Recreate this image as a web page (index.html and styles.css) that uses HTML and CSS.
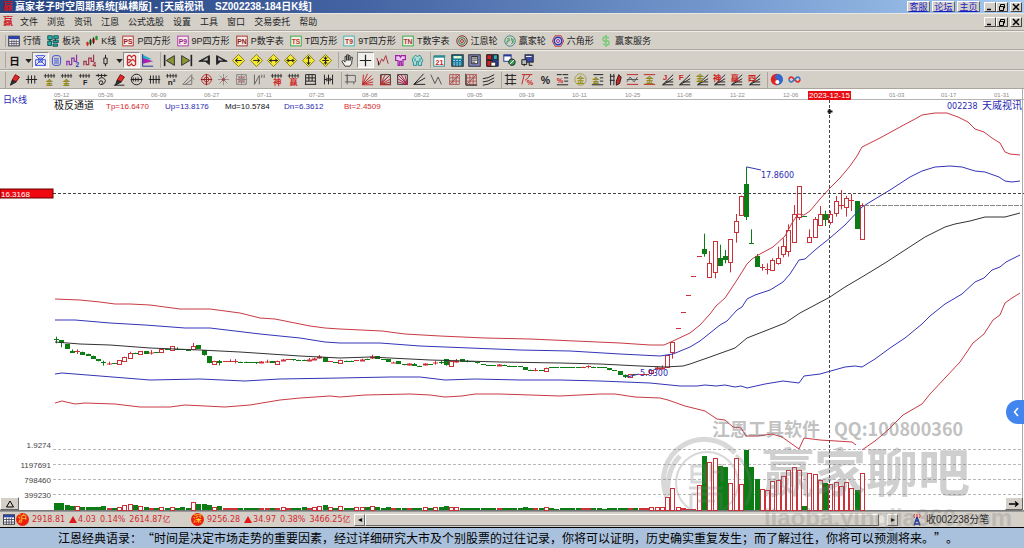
FILE: index.html
```html
<!DOCTYPE html>
<html lang="zh-CN">
<head>
<meta charset="utf-8">
<title>赢家老子时空周期系统[纵横版]</title>
<link rel="stylesheet" href="styles.css">
</head>
<body>
<header class="titlebar">
  <span class="app-logo">赢</span>
  <h1 class="title">赢家老子时空周期系统[纵横版] - [天威视讯&nbsp;&nbsp;&nbsp; SZ002238-184日K线]</h1>
  <nav class="links"><a class="link" href="#service">客服</a><a class="link" href="#forum">论坛</a><a class="link" href="#home">主页</a></nav>
  <div class="window-buttons">
    <button class="win" aria-label="最小化"><svg viewBox="0 0 10 8"><path d="M2 6.5h4" stroke="#000" stroke-width="1.5"/></svg></button>
    <button class="win" aria-label="还原"><svg viewBox="0 0 10 8"><path d="M3.500 3V1.500h4V5H6M2.500 3.500h4v4h-4z" fill="none" stroke="#000"/></svg></button>
    <button class="win close" aria-label="关闭"><svg viewBox="0 0 10 8"><path d="M2 1l6 6M8 1L2 7" stroke="#000" stroke-width="1.5"/></svg></button>
  </div>
</header>
<div class="menubar">
  <span class="app-logo">赢</span>
  <nav class="menu">
    <button>文件</button><button>浏览</button><button>资讯</button><button>江恩</button><button>公式选股</button><button>设置</button><button>工具</button><button>窗口</button><button>交易委托</button><button>帮助</button>
  </nav>
  <div class="window-buttons">
    <button class="win" aria-label="最小化子窗口"><svg viewBox="0 0 10 8"><path d="M2 6.5h4" stroke="#000" stroke-width="1.5"/></svg></button>
    <button class="win" aria-label="还原子窗口"><svg viewBox="0 0 10 8"><path d="M3.500 3V1.500h4V5H6M2.500 3.500h4v4h-4z" fill="none" stroke="#000"/></svg></button>
    <button class="win close" aria-label="关闭子窗口"><svg viewBox="0 0 10 8"><path d="M2 1l6 6M8 1L2 7" stroke="#000" stroke-width="1.5"/></svg></button>
  </div>
</div>
<div class="toolbar"><div class="named" id="named"></div></div>
<div class="toolbar tall" id="view-tools"></div>
<div class="toolbar" id="draw-tools"></div>
<main class="chart">
  <svg class="plot" id="plot" viewBox="0 89 1024 422" role="img" aria-label="天威视讯 日K线"></svg>
  <button class="corner left" aria-label="展开"><svg viewBox="0 0 12 8"><path d="M2.500 7L6 1L9.500 7z" fill="none" stroke="#000"/></svg></button>
  <button class="corner right" aria-label="右移"><svg viewBox="0 0 12 8"><path d="M1 4h9M7 1.500L10 4L7 6.500" fill="none" stroke="#000" stroke-width="1.300"/></svg></button>
  <button class="drawer" aria-label="侧栏"><svg viewBox="0 0 8 10"><path d="M6 1L2.500 5L6 9" fill="none" stroke="#fff" stroke-width="1.500"/></svg></button>
</main>
<div class="status">
  <svg class="status-icon" viewBox="0 0 14 12"><rect x=".5" y=".5" width="13" height="11" fill="#fff" stroke="#223"/><path d="M1 2h12" stroke="#2a46a8" stroke-width="3"/><path d="M1 6h12M1 9h12M4 4v8M7 4v8M10 4v8" stroke="#445"/></svg>
  <span class="badge">沪</span>
  <p class="quote sh"><span>2918.81</span> <i class="up"></i><span>4.03</span> <span>0.14%</span> <span>2614.87亿</span></p>
  <span class="badge">深</span>
  <p class="quote sz"><span>9256.28</span> <i class="up"></i><span>34.97</span> <span>0.38%</span> <span>3466.25亿</span></p>
  <div class="scroll">
    <button class="arrow" aria-label="向左">◂</button><span class="thumb"></span><button class="arrow" aria-label="向右">▸</button>
  </div>
  <div class="feed">
    <svg class="antenna" viewBox="0 0 10 13"><path d="M5 4L2 12.500M5 4L8 12.500M3.500 8h3M2.500 11h5" stroke="#22329c" fill="none" stroke-width="1.300"/><path d="M2.500 1q-1.500 2 0 4M7.500 1q1.500 2 0 4M5 1v3" stroke="#e03030" fill="none"/></svg>
    <span>收002238分笔</span>
  </div>
  <span class="site-mark">liaoba.yingjia360.com</span>
</div>
<footer class="motto">江恩经典语录：“时间是决定市场走势的重要因素，经过详细研究大市及个别股票的过往记录，你将可以证明，历史确实重复发生；而了解过往，你将可以预测将来。”。</footer>
<script src="app.js"></script>
</body>
</html>
```
FILE: styles.css
```css
* { box-sizing: border-box; }
body {
  margin: 0;
  background: #d4d0c8;
  color: #222;
  font: 9px/12px "Liberation Sans", "Noto Sans CJK SC", sans-serif;
}
button {
  font: inherit;
  color: inherit;
  background: none;
  border: 0;
  padding: 0;
}
svg { display: block; }

.titlebar {
  display: flex;
  align-items: center;
  height: 14px;
  padding: 0 2px 0 3px;
  background: linear-gradient(90deg, #25437f, #4463a2 35%, #7195cb 68%, #a6caf0);
  border-bottom: 1px solid #e9e7e2;
}
.app-logo { width: 12px; color: #d01822; font-size: 10px; font-weight: 700; }
.title {
  flex: 1;
  margin: 0;
  color: #fff;
  font-size: 10px;
  line-height: 13px;
  font-weight: 700;
  white-space: nowrap;
}
.links { display: flex; gap: 2px; margin-right: 4px; }
.link {
  width: 23px;
  height: 11px;
  line-height: 10px;
  text-align: center;
  color: #1a1ac0;
  background: #d4d0c8;
  border: 1px solid;
  border-color: #fff #666 #666 #fff;
}
.window-buttons { display: flex; margin-left: auto; }
.win {
  width: 12px;
  height: 10px;
  background: #d4d0c8;
  border: 1px solid;
  border-color: #fff #444 #444 #fff;
}
.win svg { width: 10px; height: 8px; }
.close { margin-left: 2px; }

.menubar {
  display: flex;
  align-items: center;
  height: 17px;
  padding: 0 2px 0 3px;
  border-bottom: 1px solid #aaa69e;
}
.menu { display: flex; gap: 9px; margin-left: 5px; }

.toolbar {
  display: flex;
  align-items: center;
  height: 19px;
  padding-left: 5px;
  border-top: 1px solid #efede8;
  border-bottom: 1px solid #aaa69e;
}
.tall { height: 20px; }
.named {
  display: flex;
  justify-content: space-between;
  width: 646px;
  padding-left: 2px;
  border-left: 1px solid #aaa69e;
}
.named button { display: flex; align-items: center; gap: 3px; white-space: nowrap; }
.named svg { width: 12px; height: 12px; }
.group {
  display: flex;
  justify-content: space-between;
  border-left: 1px solid #aaa69e;
}
.group + .group { margin-left: 4px; }
.group button {
  display: grid;
  place-items: center;
  width: 17px;
  height: 16px;
}
.group svg { width: 13px; height: 13px; overflow: visible; }
.group .narrow { width: 10px; }
.group .pressed {
  background: #f1efeb;
  border: 1px solid;
  border-color: #888 #fff #fff #888;
}

.chart { position: relative; background: #fff; border-bottom: 1px solid #777; }
.plot { width: 100%; height: auto; margin-bottom: -1px; }
.corner {
  position: absolute;
  bottom: 0;
  display: grid;
  place-items: center;
  height: 13px;
  background: #d4d0c8;
  border: 1px solid;
  border-color: #fff #666 #666 #fff;
}
.corner svg { width: 12px; height: 8px; }
.left { left: 0; width: 19px; }
.right { right: 1px; width: 18px; }
.drawer {
  position: absolute;
  right: 0;
  top: 311px;
  width: 18px;
  height: 24px;
  padding-left: 6px;
  background: #4285ee;
  border-radius: 12px 0 0 12px;
}
.drawer svg { width: 8px; height: 10px; }

.status {
  position: relative;
  display: flex;
  align-items: center;
  height: 16px;
  padding-left: 3px;
  border-top: 1px solid #999;
}
.status-icon { width: 12px; height: 11px; margin-right: 1px; }
.badge {
  width: 13px;
  height: 13px;
  border-radius: 50%;
  background: #e8200c;
  color: #ffe23c;
  line-height: 13px;
  text-align: center;
}
.quote {
  display: flex;
  align-items: center;
  gap: 4px;
  margin: 0 0 0 3px;
  color: #d6282c;
  font-family: "DejaVu Sans", "Noto Sans CJK SC", sans-serif;
  font-size: 8px;
  white-space: nowrap;
}
.sh { width: 159px; }
.sz { width: 147px; }
.up {
  border: 4px solid transparent;
  border-top: 0;
  border-bottom: 7px solid #e01818;
  margin-right: -3px;
}
.scroll {
  display: flex;
  flex: 1;
  height: 12px;
  margin-right: 14px;
  background: #e8e5df;
}
.arrow, .thumb {
  background: #d4d0c8;
  border: 1px solid;
  border-color: #fff #666 #666 #fff;
}
.arrow { width: 11px; line-height: 9px; font-size: 8px; color: #000; }
.thumb { flex: 1; margin-right: 8px; }
.feed {
  display: flex;
  align-items: center;
  gap: 4px;
  width: 112px;
  font-size: 10px;
}
.antenna { width: 10px; height: 13px; }
.site-mark {
  position: absolute;
  right: 12px;
  bottom: -6px;
  color: #777;
  opacity: .25;
  font: 700 24px/30px "Liberation Sans", sans-serif;
  pointer-events: none;
}
.motto {
  min-height: 21px;
  padding-left: 58px;
  background: #a9c1dc;
  border-top: 1px solid #000;
  color: #000;
  font: 12px/20px "Noto Sans CJK SC", sans-serif;
  text-spacing-trim: space-all;
}

.axis { font-size: 6px; fill: #8c8c8c; }
.small { font-size: 8px; }
.price { font: 8px "DejaVu Sans", sans-serif; fill: #2a2ab4; }
.indicator { font-size: 10px; fill: #111; }
.blue { fill: #2a2ab4; }
.red { fill: #d6282c; }
.code { font: 10px "Liberation Sans", "Noto Sans CJK SC", sans-serif; fill: #2a2ab4; }
.mark { font-family: "Noto Sans CJK SC", sans-serif; font-weight: 700; fill: #777; }
```
FILE: app.js
```js
const svg = (body) =>
  `<svg viewBox="0 0 16 16" fill="none" stroke="#222" stroke-width="1.2">${body}</svg>`;
const glyph = (t, color, x = 8, y = 13, size = 10) =>
  `<text x="${x}" y="${y}" font-size="${size}" font-weight="700" text-anchor="middle" fill="${color}" stroke="none">${t}</text>`;
const boxed = (t, frame, ink) =>
  svg(`<rect x="1" y="1.500" width="14" height="13" fill="#f4ece6" stroke="${frame}"/>` + glyph(t, ink, 8, 12, 9));

const table = svg('<rect x="1" y="1.500" width="14" height="13" fill="#fff" stroke="#223"/><path d="M1 3.500h14" stroke="#2a3fa8" stroke-width="4"/><path d="M1 8.500h14M1 11.500h14M5 6v8M8 6v8M11 6v8" stroke="#445" stroke-width="1"/>');

const named = [
  ['行情', table],
  ['板块', svg('<path d="M1 1h6v5H1zM9 1h6v4H9zM1 8h5v6H1zM8 7h7v3H8zM8 12h6v3H8z" fill="#24b3ae" stroke="#12504e"/><path d="M4 6v3M11 5v3" />')],
  ['K线', svg('<path d="M2 15V9M14 7V1" stroke="#d22"/><path d="M1 10h2v3H1zM9 5h2v5H9z" fill="#d22" stroke="#d22"/><path d="M5 7h2v5H5zM13 2h2v4h-2z" fill="#1a9a3a" stroke="#1a9a3a"/><path d="M6 5v9M10 3v9"/>')],
  ['P四方形', boxed('PS', '#b03030', '#a01818')],
  ['9P四方形', boxed('P9', '#b030b0', '#a01890')],
  ['P数字表', boxed('PN', '#a02828', '#8a1818')],
  ['T四方形', boxed('TS', '#28a83c', '#c03a20')],
  ['9T四方形', boxed('T9', '#30b4b0', '#a83030')],
  ['T数字表', boxed('TN', '#28a83c', '#a83030')],
  ['江恩轮', svg('<circle cx="8" cy="8" r="7" stroke="#7a1c1c"/><circle cx="8" cy="8" r="4.500" stroke="#286e38"/><circle cx="8" cy="8" r="2" stroke="#a02020"/>')],
  ['赢家轮', svg('<circle cx="8" cy="8" r="7" stroke="#3c8888"/><path d="M4 5h3v3H4v4M9 4q3 1 1 3q3 1 0 5M12 5v6" stroke="#2d9a54"/>')],
  ['六角形', svg('<path d="M4 1h8l3.500 7L12 15H4L.5 8z" stroke="#c23030"/><circle cx="8" cy="8" r="5" stroke="#2a3cc4" stroke-width="2"/><circle cx="8" cy="8" r="2" stroke="#8a2ab0"/>')],
  ['赢家服务', svg('<path d="M12 4Q4 1 4 5t4 3t4 3t-8 1M8 0v16" stroke="#7acb7a" stroke-width="2.200"/>')]
];
document.getElementById('named').innerHTML =
  named.map(([label, icon]) => `<button>${icon}<span>${label}</span></button>`).join('');

const caret = '<path d="M4 6h8l-4 5z" fill="#222" stroke="none"/>';
const diamond = (mark) =>
  `<path d="M8 .5L15.500 8L8 15.500L.5 8z" fill="#f4e832" stroke="#8c8210"/><path d="${mark}"/>`;
const comb = '<path d="M1 3.500h14M3 1v5M6.500 1v5M10 1v5M13.500 1v5" stroke-width="1"/>';
const fan = '<path d="M2 14.500L15 2M2 14.500L15 7M2 14.500h13M6 11h9"/>';
const burst = (c) => `<path d="M2 14L3 2M2 14L8 1M2 14L13 3M2 14L15 7M2 14L15 11M1 14.500h14" stroke="${c}"/>`;
const star = '<path d="M8 1v14M1 8h14M3 3l10 10M13 3L3 13" stroke="#888" stroke-width="1"/>';
const grid = (c) => `<path d="M2 2h12v12H2zM2 6h12M2 10h12M6 2v12M10 2v12M2 14L14 2" stroke="${c}" stroke-width="1"/>`;
const pencil = '<path d="M5 9L9 2l5 3l-4 6z" fill="#e02828" stroke="#801010"/><path d="M5 9l5 2l-7 4z" fill="#333"/>';
const rules = (c) => `<path d="M1 2h14M1 14h14" stroke="${c}"/>`;

const viewGroups = [
  [151, [
    ['日', glyph('日', '#111', 8, 13, 13)], ['周期', caret, 'narrow'],
    ['叠加', '<path d="M2 2l12 12M14 2L2 14M3 2h10M2 7h12v7H2zM6 5h4v5H6z" stroke="#3a4fe0"/>', 'pressed'],
    ['信息', '<rect x="3" y="2" width="10" height="12" rx="3" stroke="#3a4fe0"/><path d="M5 6h6M5 8.500h6M5 11h6" stroke="#3a4fe0"/>'],
    ['走势2', '<path d="M1 14V9h3v4h3V5h3v4h3V1" stroke="#8a34a8" stroke-width="1.500"/>' + glyph('2', '#3038c0', 14, 16, 8)],
    ['走势4', '<path d="M1 14V9h3v4h3V5h3v4h3V1" stroke="#a03450" stroke-width="1.500"/>' + glyph('4', '#a02030', 14, 16, 8)],
    ['K线样式', '<path d="M6 5h4v7H6zM8 1v4M8 12v3"/>'], ['样式选择', caret, 'narrow'],
    ['通道', '<path d="M3 3q3-3 5 1q3-4 5-1v10q-3 3-5-1q-3 4-5 1zM3 7h4M9 6l4 4M4 11l5-4" stroke="#c82828" stroke-width="1.500"/>', 'pressed'],
    ['旗', '<path d="M2 1l11 5L2 9z" fill="#22b0c8" stroke="none"/><path d="M2 5l13 4L2 12z" fill="#b020b0" stroke="none"/><path d="M2 0v15h13" stroke="#2038a0"/>']
  ]],
  [174, [
    ['最前', '<path d="M2 1v14" stroke-width="2"/><path d="M14 2v12L4 8z" fill="#8a9630" stroke="#333"/>'],
    ['最后', '<path d="M14 1v14" stroke-width="2"/><path d="M2 2v12l10-6z" fill="#8a9630" stroke="#333"/>'],
    ['左', '<path d="M14 2v11L9 9H1z" fill="#222"/><path d="M12 4v4H6z" fill="#bbb" stroke="none"/>'],
    ['右', '<path d="M2 2v11l5-4h8z" fill="#222"/><path d="M4 4v4h6z" fill="#bbb" stroke="none"/>'],
    ['左移', diamond('M4 8h8M7 5.500L4 8l3 2.500')], ['右移', diamond('M4 8h8M9 5.500L12 8l-3 2.500')],
    ['拉宽', diamond('M3 8h10M6 6L3 8l3 2M10 6l3 2l-3 2')], ['缩窄', diamond('M3 8h10M4 6l3 2l-3 2M12 6L9 8l3 2')],
    ['拉高', diamond('M8 3v10M6 6l2-3l2 3M6 10l2 3l2-3')], ['压低', diamond('M8 3v10M4 8h8M6 4l2 3l2-3M6 12l2-3l2 3')]
  ]],
  [88, [
    ['手形', '<path d="M5 15L1 9l2-1l2 2V3h2v5V1h2v7V2h2v6l1-4h2l-1 8l-2 3z" fill="#f5f2ec" stroke="#333"/>'],
    ['十字', '<path d="M8 1v14M1 8h14" stroke-width="1.500"/>', 'pressed'],
    ['波浪', '<path d="M1 5l3 8l3-7l2 3l3-7l3 10" stroke="#b03040"/><path d="M3 9v5"/>'],
    ['工具一', '<path d="M2 2h5l1 2l1-2h5v5h-3v7H9V9H7v5H5V8H2z" fill="#eac6f0" stroke="#a020a8" stroke-width="1.500"/>'],
    ['工具二', '<path d="M3 4q2-4 5-1q4-3 5 2q3 3 0 6v3H9V9H7v5H3v-3Q0 7 3 4zM5 5v4M11 5v5" fill="#b2ded8" stroke="#208c90"/>']
  ]],
  [106, [
    ['日历', '<rect x="1" y="3" width="13" height="12" fill="#fff" stroke="#308a90"/><path d="M1 3h14" stroke="#308a90" stroke-width="3"/>' + glyph('21', '#d02020', 8, 13, 9)],
    ['计算器', '<rect x="1" y="1" width="14" height="14" fill="#127ea0"/><path d="M3 4h10" stroke="#e2f4d0" stroke-width="3"/><path d="M3 8h10M3 11h10M3 13.500h10" stroke="#d2e0e8" stroke-dasharray="2 1.500"/>'],
    ['记录', '<rect x="1" y="1" width="14" height="14" fill="#8a92cc" stroke="#223"/><path d="M4 3h8v9H4z" fill="#fff"/><path d="M5 5h6M5 7.500h6M5 10h4"/>'],
    ['保存', '<path d="M1 1h14v14H1z" fill="#2440b0"/><path d="M1 8h7v7H1z" fill="#d02020"/><path d="M1 1h6v6H1z" fill="#d02020"/><path d="M9 1h5v6H9z" fill="#30b0a8"/><path d="M6 10h6v5H6z" fill="#fff"/>'],
    ['联网', '<rect x="1" y="1" width="9" height="8" fill="#fff" stroke="#2a3a90"/><path d="M1 2h9" stroke="#2a3a90" stroke-width="2"/><circle cx="11" cy="10" r="4" fill="#3aa058"/><path d="M8 13l6-6" stroke="#fff"/>'],
    ['屏幕', '<rect x="5" y="1" width="10" height="9" fill="#3a4aa8"/><path d="M6 3h7" stroke="#fff"/><path d="M1 7h6v6H1zM4 13v2M10 10v4h4" fill="#b8b8b8"/>']
  ]]
];

const drawGroups = [
  [332, [
    ['画笔', pencil], ['平行', '<path d="M1 8h14M4 3v10M8 3v10M12 3v10"/>'],
    ['黄金1', comb + glyph('金', '#8e8414', 8, 15, 9)], ['黄金2', comb + glyph('金', '#8e8414', 8, 15, 9)],
    ['斐波那契', comb + glyph('F', '#222', 9, 15, 9)],
    ['螺旋', '<path d="M1 3h14M4 1v4M8 1v4M12 1v4M4 9q1-4 6-3q5 3 1 7q-5 3-6-1q1-4 4-2q2 2-1 3"/>'],
    ['红笔', pencil + '<path d="M1 15h13"/>'],
    ['周期圆', '<circle cx="8" cy="8" r="6.500"/><path d="M1 8h14M4 5.500v5M7 5.500v5M10 5.500v5"/>'],
    ['等分', '<path d="M1 8h14M3 3v10M6.500 3v10M10 3v10M13.500 3v10"/>'],
    ['平方', comb + glyph('n²', '#222', 8, 15, 10)],
    ['三角', '<path d="M1 14L12 2v12zM4 14l8-6M12 5l3 3" stroke="#777"/>'],
    ['圆心', '<circle cx="8" cy="8" r="6" stroke="#b83030"/><circle cx="8" cy="8" r="3" stroke="#b83030"/><path d="M8 1v14M1 8h14" stroke="#902020"/>'],
    ['星', star + '<circle cx="8" cy="8" r="2" fill="#a84848" stroke="none"/>'],
    ['网星', star + '<path d="M2 2h12v12H2z" stroke="#888"/><path d="M5 5h6v6H5z" stroke="#b06060"/>'],
    ['折线', '<path d="M3 2v12L9 3v11M12 2v4M15 2v4" stroke="#666"/>'],
    ['神', comb + glyph('神', '#d02424', 9, 15, 10)], ['赢', comb + glyph('赢', '#d02424', 8, 15, 10)],
    ['网格', '<path d="M2 2h12v12M2 2v12M2 6h12M2 10h12M6 2v8M10 2v8M1 14h14" />'],
    ['间隔', '<path d="M3 2v12M8 2v12M13 2v12M3 8h3M13 8h-3M5 6l3 2l-3 2M11 6L8 8l3 2"/>']
  ]],
  [156, [
    ['方框', '<path d="M4 3h10v8H4zM1 3h3M4 1v13M1 11h4M12 11v3" stroke="#666"/>'], ['扇形', burst('#c02828')],
    ['扇形框', '<path d="M2 2h12v12H2z" stroke="#333"/><path d="M2 13L13 3" stroke="#5a38b0"/>' + burst('#b83030')],
    ['反扇框', '<path d="M2 2h12v12H2z" stroke="#333"/><path d="M14 14L2 2M14 14L6 2M14 14L2 7M14 14L11 3M14 14L2 11" stroke="#b02050"/>'],
    ['角度', '<path d="M1 14h14M1 14L13 1M1 14L15 6"/>'], ['波段', '<path d="M1 2l5 11l4-8l4 9" stroke="#555"/>'],
    ['红网', grid('#a84444')], ['红网角', grid('#a84444') + '<path d="M1 1v14h14"/>'],
    ['平行线', '<path d="M1 7q6 0 14-5M1 11q6 0 14-5M1 15q6 0 14-5"/>']
  ]],
  [262, [
    ['阶梯', '<path d="M4 1v14M10 1v14M1 3h14M4 8h11M1 13h14"/>'],
    ['反百分比', '<path d="M1 2h13M4 2L1 14M11 2Q10 6 5 9" stroke="#c02828"/>' + glyph('%', '#d02020', 11, 15, 9)],
    ['百分比', glyph('%', '#222', 8, 13, 13)],
    ['百分线', '<path d="M8 2h7M10 6h5M10 10h5M1 14.500h14M1 2h6"/>' + glyph('%', '#d02020', 5, 12, 9)],
    ['金圆', '<circle cx="8" cy="8" r="7" stroke="#a09a50"/>' + glyph('金', '#9a9018', 8, 12, 10)],
    ['金线', '<path d="M3 2h12M11 6h4M11 10h4M1 14.500h14"/>' + glyph('金', '#8e8414', 6, 12, 9)],
    ['标笔', '<path d="M2 1v14M6 1v14M1 4h6M1 9h6"/><path d="M9 10l3-8l3 3l-2 8l-4 2z" fill="#c82828" stroke="#401010"/>'],
    ['红波', rules('#c02828') + '<path d="M1 11l4-6l5 6l4-6M1 8h14" stroke="#555"/>'],
    ['金红线', rules('#c02828') + glyph('金', '#8e8414', 8, 12, 10)],
    ['J扇', fan + glyph('J', '#d02020', 5, 9)], ['F扇', fan + glyph('F', '#d02020', 4, 9)],
    ['金扇', fan + glyph('金', '#8e8414', 5, 10)], ['神扇', fan + glyph('神', '#d02020', 5, 10)],
    ['赢扇', fan + glyph('赢', '#d02020', 6, 10)], ['四扇', fan + glyph('四', '#d02020', 5, 10)]
  ]],
  [36, [
    ['太极', '<circle cx="8" cy="8" r="7" fill="#e02424" stroke="none"/><path d="M10 1q-7 3-2 7q5 3 0 7A7 7 0 0 0 10 1z" fill="#3068d0" stroke="none"/><circle cx="9" cy="11" r="2.500" fill="#fff" stroke="none"/>'],
    ['循环', '<path d="M1 8q2-5 5-2l4 4q3 3 5-2" stroke="#e02828" stroke-width="2"/><path d="M1 8q2 5 5 2l4-4q3-3 5 2" stroke="#3878c8" stroke-width="2"/>']
  ]]
];
const drawToolbar = (id, groups) => {
  document.getElementById(id).innerHTML = groups.map(([width, tools]) =>
    `<div class="group" style="width:${width}px">` +
    tools.map(([label, body, kind = '']) => `<button class="${kind}" aria-label="${label}">${svg(body)}</button>`).join('') +
    '</div>').join('');
};
drawToolbar('view-tools', viewGroups);
drawToolbar('draw-tools', drawGroups);

// Candles: colour, body top, body bottom, optional wick top and wick bottom, in thirds of a unit.
const quiet = `g57,61,50,70 g61,71,60,82 g71,87 g92,98,88,98 r94,96,88,102 g95,104 g101,108 g107,116 g117,124 g127,129,122,137
r129,133,125,135 g130,131 r121,133 r110,123 r98,114,95,116 g98,99 r93,101 g93,101 r95,98,90,104 g97,98 r87,97 g88,89 r78,89 g86,88,82,90 g88,89
g91,92 r78,87,69,90 g76,87 g91,107 g108,130 r122,130 g122,127,120,136 r124,125 r122,124,118,126 r122,123,117,130 g125,126 g125,126 g126,127
g127,128,126,132 r123,128 r123,126,119,129 g123,128 r122,130 r117,122 r118,120 g118,122 g119,122 g119,122 r116,122,114,124 r113,118 r108,113,105,116
g111,125 r124,125 g127,128 r119,128 g122,123 g122,123 r121,122 r116,121 g116,117 r108,113,104,117 g109,117 g118,119 g117,126 r125,129 g124,132
g132,136 r130,137 g131,136,129,138 g137,139 r130,137 g133,134 r126,130,122,134 g126,130,123,132 g118,137 r123,137 r120,125,117,128 g118,126
g122,124,120,127 g124,125 g127,131 g133,134 g136,137 g136,137 r132,137 g134,135 g137,138 g138,139 g138,139 g141,150 g149,150 r150,152,144,154
g151,152 r143,153 g142,143 g142,143 g142,143 g142,143 g142,143 g142,143 r140,141 r139,141,136,145 g140,141 g141,142 g142,143 g144,151 g150,152
g153,165 g165,171,163,174 r162,171 g163,164 r163,164 r162,163 r150,158 r141,146,138,150 r140,146,136,148 r106,142 r67,98,65,116`;
const rally = `r715,716 r667,668 r616,617 r559,560 r499,500 g478,494,431,500 r520,563,483,563 r454,547,454,565 g503,527,464,527 g498,510,480,520
r447,515,447,547 r394,428,372,458 r317,374 g282,380,230,390 g460,461,418,461 g498,531,492,531 r530,531,522,542 r536,537,520,553 r511,540,505,540
r505,521,470,524 r469,494,445,502 r421,485,403,500 r371,455,345,455 r289,382,289,390 g379,380 r442,456,418,456 r388,443,381,443 r371,403,348,405
g373,392,362,408 r371,396,362,404 r332,368,318,380 r345,346,300,358 r325,352,318,380 r330,331,312,363 g333,416 r346,448,340,448`;
const read = (text, base) => text.trim().split(/\s+/).map((c) => {
  const [top, bottom, high = top, low = bottom] = c.slice(1).split(',').map(Number);
  const y = (v) => base + v / 3;
  return { up: c[0] === 'r', top: y(top), bottom: y(bottom), high: y(high), low: y(low) };
});
const candles = [...read(quiet, 320), ...read(rally, 90)];

const volumes = [21, 21, 14, 12, 12, 9, 9, 9, 9, 11, 6, 6, 10, 14, 19, 14, 11, 9, 7, 7, 10, 6, 10, 6, 9, 6, 24, 18, 17, 15, 9, 11, 7, 7, 7, 5, 6, 6,
  6, 7, 6, 7, 7, 10, 6, 6, 6, 8, 7, 9, 12, 14, 8, 7, 11, 7, 6, 8, 8, 8, 11, 9, 6, 8, 6, 6, 6, 6, 6, 6, 8, 6, 8, 10, 12, 10, 8, 6, 6, 6, 6, 6, 6, 5, 6, 6,
  6, 6, 6, 9, 6, 6, 6, 8, 6, 3, 6, 6, 6, 6, 6, 6, 6, 5, 3, 6, 6, 6, 6, 6, 6, 7, 7, 8, 9, 8, 39, 65, 9, 5, 3, 2, 75, 163, 144, 157, 133, 128, 81, 155,
  78, 180, 130, 94, 64, 60, 88, 90, 103, 120, 130, 121, 12, 112, 108, 90, 80, 78, 85, 73, 85, 66, 60, 112];

const bands = [
  ['#c83a44', '55,299 80,300 100,302 115,304 130,304 150,305 180,309 210,309 240,313 260,318 275,319 285,321 310,326 325,328 340,329 382,331 405,334 440,336 485,338 530,339 575,341 620,343 650,345 664,345 673,341 690,333 700,325 710,314 716,306 725,298 735,283 742,272 747,264 752,259 760,254 773,247 785,236 792,223 798,214 804,215 810,211 820,199 830,188 840,178 850,166 857,156 862,147 880,138 900,127 915,119 922,115 935,113 947,113 958,117 968,122 975,129 984,132 992,138 1000,143 1005,152 1010,154 1020,155'],
  ['#3434b8', '55,320 75,320 110,323 145,325 185,328 210,328 235,331 260,334 300,338 325,342 340,343 380,343 420,346 470,348 520,350 570,351 620,354 660,356 673,354 690,347 700,341 710,333 720,325 727,321 737,310 742,307 747,299 755,295 770,290 783,282 790,274 799,260 805,259 815,250 830,238 845,225 862,207 875,199 890,190 910,177 922,171 935,167 950,166 962,167 975,171 985,172 999,177 1005,181 1012,182 1020,181'],
  ['#333', '55,342 80,344 110,345 150,348 200,350 240,352 300,356 340,358 370,357 430,360 500,362 560,363 600,364 640,366 665,367 683,366 690,364 710,357 735,348 747,338 770,329 785,323 800,313 830,297 845,287 862,277 885,263 905,250 925,237 945,227 955,224 970,221 985,217 1005,217 1020,213'],
  ['#3434b8', '55,374 62,373 100,376 150,380 200,379 245,381 280,379 340,378 390,377 420,377 445,380 475,379 520,380 560,380 600,381 625,382 650,383 680,386 697,386 705,385 716,386 725,385 735,387 741,386 747,388 765,384 783,381 799,383 804,376 820,374 845,367 855,366 862,367 875,359 890,348 905,338 922,324 930,316 945,304 962,294 975,282 984,278 992,270 1000,267 1006,262 1020,255'],
  ['#c83a44', '55,403 62,401 75,404 85,403 115,404 140,407 170,407 185,405 225,407 250,405 280,400 300,398 330,396 340,397 365,395 410,394 430,395 445,397 462,396 475,394 500,394 560,396 600,394 615,394 635,397 660,398 668,400 685,406 705,411 717,419 725,420 733,427 741,428 746,436 758,436 772,434 782,437 799,449 804,438 820,440 852,442 856,445'],
  ['#c83a44', '862,450 875,441 888,430 903,415 922,404 930,394 945,378 960,362 973,343 984,334 993,320 1000,315 1005,303 1012,298 1020,293']
];

const out = [];
const line = (x1, y1, x2, y2, color, extra = '') =>
  out.push(`<line x1="${x1}" y1="${y1}" x2="${x2}" y2="${y2}" stroke="${color}" ${extra}/>`);
const text = (x, y, cls, value, extra = '') =>
  out.push(`<text x="${x}" y="${y}" class="${cls}" ${extra}>${value}</text>`);

line(53, 99.5, 1024, 99.5, '#b4b4b4');
[['05-12', 54], ['05-26', 98], ['06-09', 151], ['06-27', 204], ['07-11', 257], ['07-25', 309], ['08-08', 362], ['08-22', 414],
  ['09-05', 467], ['09-19', 519], ['10-11', 572], ['10-25', 625], ['11-08', 677], ['11-22', 730], ['12-06', 783],
  ['01-03', 889], ['01-17', 941], ['01-31', 994]].forEach(([d, x]) => text(x, 97, 'axis', d));

[[449.5, 448, '1.9274'], [464.5, 468, '1197691'], [479.5, 483, '798460'], [494.5, 498, '399230']].forEach(([y, base, label]) => {
  line(53, y, 1021, y, '#b8b8b8', 'stroke-dasharray="3 2"');
  text(51, base, 'small', label, 'text-anchor="end" fill="#444"');
});

candles.forEach((c, i) => {
  const x = Math.round(56 + i * 5.268);
  const color = c.up ? '#cc3038' : '#0c7c14';
  const h = volumes[i] / 3;
  const flat = c.bottom - c.top < 1;
  const body = (y, height, width) => c.up && height > 2
    ? out.push(`<rect x="${x - 1.5}" y="${y}" width="${width - 1}" height="${height}" fill="#fff" stroke="${color}"/>`)
    : out.push(`<rect x="${x - 2}" y="${y}" width="${width}" height="${height}" fill="${color}"/>`);
  line(x + .5, c.high, x + .5, c.low, color);
  body(Math.round(c.top) + .5 * c.up * !flat, flat ? 1 : Math.max(1, Math.round(c.bottom - c.top)), 5);
  const tall = Math.max(1, Math.round(h));
  body(510 - tall + (c.up && tall > 2 ? .5 : 0), tall, 5);
});

bands.forEach(([color, points]) =>
  out.push(`<polyline points="${points}" fill="none" stroke="${color}"/>`));

line(53, 193.5, 1024, 193.5, '#444', 'stroke-dasharray="3 2"');
line(829.5, 100, 829.5, 510, '#444', 'stroke-dasharray="3 2"');
line(864, 205.5, 1022, 205.5, '#888', 'stroke-dasharray="5 1"');
out.push('<path d="M827.500 111.500h5M829.500 109v5" stroke="#111" stroke-width="2"/>');
out.push('<path d="M747 167l14 3M627 377l12-3" stroke="#3434b8" fill="none"/>');
out.push('<rect x="0" y="189" width="53" height="9" fill="#f00810" stroke="#600"/><rect x="808" y="91" width="43" height="9" fill="#e80c14"/>');
text(1, 197, 'small', '16.3168', 'fill="#fff"');
text(809, 98, 'small', '2023-12-15', 'fill="#fff"');
text(761, 178, 'price', '17.8600');
text(640, 376, 'price', '5.9300');
text(3, 103, 'blue', '日K线');
text(54, 109, 'indicator', '极反通道');
text(106, 109, 'small red', 'Tp=16.6470');
text(165, 109, 'small blue', 'Up=13.8176');
text(225, 109, 'small', 'Md=10.5784', 'fill="#111"');
text(284, 109, 'small blue', 'Dn=6.3612');
text(344, 109, 'small red', 'Bt=2.4509');
text(947, 109, 'price', '002238');
text(1022, 109, 'code', '天威视讯', 'text-anchor="end"');

text(712, 436, 'mark', '江恩工具软件', 'font-size="18" opacity=".45"');
text(834, 436, 'mark', 'QQ:100800360', 'font-size="18" opacity=".45"');
text(762, 492, 'mark', '赢家聊吧', 'font-size="52" opacity=".35"');
out.push('<g fill="none" stroke="#777" opacity=".28"><circle cx="707" cy="483" r="31" stroke-width="2"/><path d="M667 497A41 41 0 0 1 735 453M680 456Q666 470 668 496" stroke-width="5"/><path d="M736 455A41 41 0 0 1 746 505" stroke-width="3"/><path d="M692 466h13v16h-13zM692 474h13M711 464v18M722 464v18M711 472h11M689 488h34M691 494h30v15M691 494v15M697 501h18" stroke-width="3"/></g>');
line(1022.5, 89, 1022.5, 511, '#aaa');

document.getElementById('plot').innerHTML = out.join('');
```
